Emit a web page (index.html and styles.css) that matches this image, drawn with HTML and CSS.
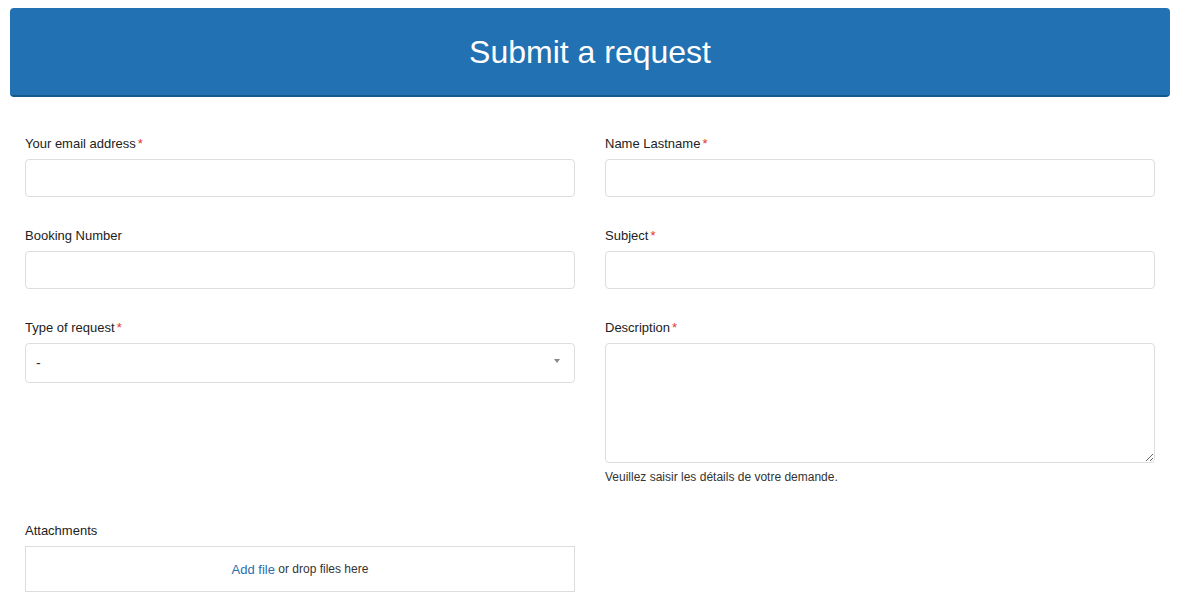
FILE: index.html
```html
<!DOCTYPE html>
<html>
<head lang="en">
    <meta charset="UTF-8">
    <title>Submit a request</title>
    <link rel="stylesheet" href="styles.css">
</head>
<body>
<div id="page">
    <div id="header">
        <h1>Submit a request</h1>
    </div>
    <form id="request-form">
        <div class="field">
            <label>Your email address<span class="req">*</span></label>
            <input type="text">
        </div>
        <div class="field">
            <label>Name Lastname<span class="req">*</span></label>
            <input type="text">
        </div>
        <div class="field">
            <label>Booking Number</label>
            <input type="text">
        </div>
        <div class="field">
            <label>Subject<span class="req">*</span></label>
            <input type="text">
        </div>
        <div class="field">
            <label>Type of request<span class="req">*</span></label>
            <div class="select">
                <span>-</span>
                <span class="arrow"></span>
            </div>
        </div>
        <div class="field">
            <label>Description<span class="req">*</span></label>
            <textarea></textarea>
            <p class="hint">Veuillez saisir les détails de votre demande.</p>
        </div>
        <div class="field attach">
            <label>Attachments</label>
            <div class="dropzone"><a href="#">Add file</a>&nbsp;or drop files here</div>
        </div>
    </form>
</div>
</body>
</html>
```

FILE: styles.css
```css
*{
    margin: 0;
    padding: 0;
    box-sizing: border-box;
}
body{
    background: #fff;
    font-family: "Liberation Sans", Arial, sans-serif;
    color: #222;
}
a{
    text-decoration: none;
    color: #2b6eb0;
}
#page{
    width: 1160px;
    margin: 8px 0 0 10px;
}
#header{
    background: #2271b3;
    border-bottom: 2px solid #135a8c;
    border-radius: 4px;
    height: 89px;
    display: flex;
    align-items: center;
    justify-content: center;
}
#header h1{
    color: #fff;
    font-weight: normal;
    font-size: 32px;
    line-height: 40px;
    margin-top: 1px;
}
#request-form{
    padding: 37px 15px 0;
    display: grid;
    grid-template-columns: 550px 550px;
    column-gap: 30px;
    row-gap: 29px;
    align-items: start;
}
.field label{
    display: block;
    font-size: 13px;
    line-height: 20px;
    margin-bottom: 5px;
}
.req{
    color: #e3342f;
    margin-left: 2px;
}
.field input,
.field textarea,
.select{
    display: block;
    width: 100%;
    height: 38px;
    border: 1px solid #ddd;
    border-radius: 4px;
    background: #fff;
    font-family: inherit;
    font-size: 14px;
    outline: none;
}
.field textarea{
    height: 120px;
    resize: vertical;
}
.select{
    height: 40px;
    display: flex;
    align-items: center;
    justify-content: space-between;
    padding: 0 14px 0 10px;
    color: #333;
}
.select .arrow{
    width: 0;
    height: 0;
    border-left: 3px solid transparent;
    border-right: 3px solid transparent;
    border-top: 4px solid #888;
    margin-top: -5px;
}
.hint{
    font-size: 12px;
    line-height: 18px;
    margin-top: 5px;
    color: #333;
}
.attach{
    margin-top: 6px;
}
.dropzone{
    height: 46px;
    border: 1px solid #ddd;
    display: flex;
    align-items: center;
    justify-content: center;
    font-size: 12px;
    color: #333;
}
.dropzone a{
    font-size: 13px;
}
```
